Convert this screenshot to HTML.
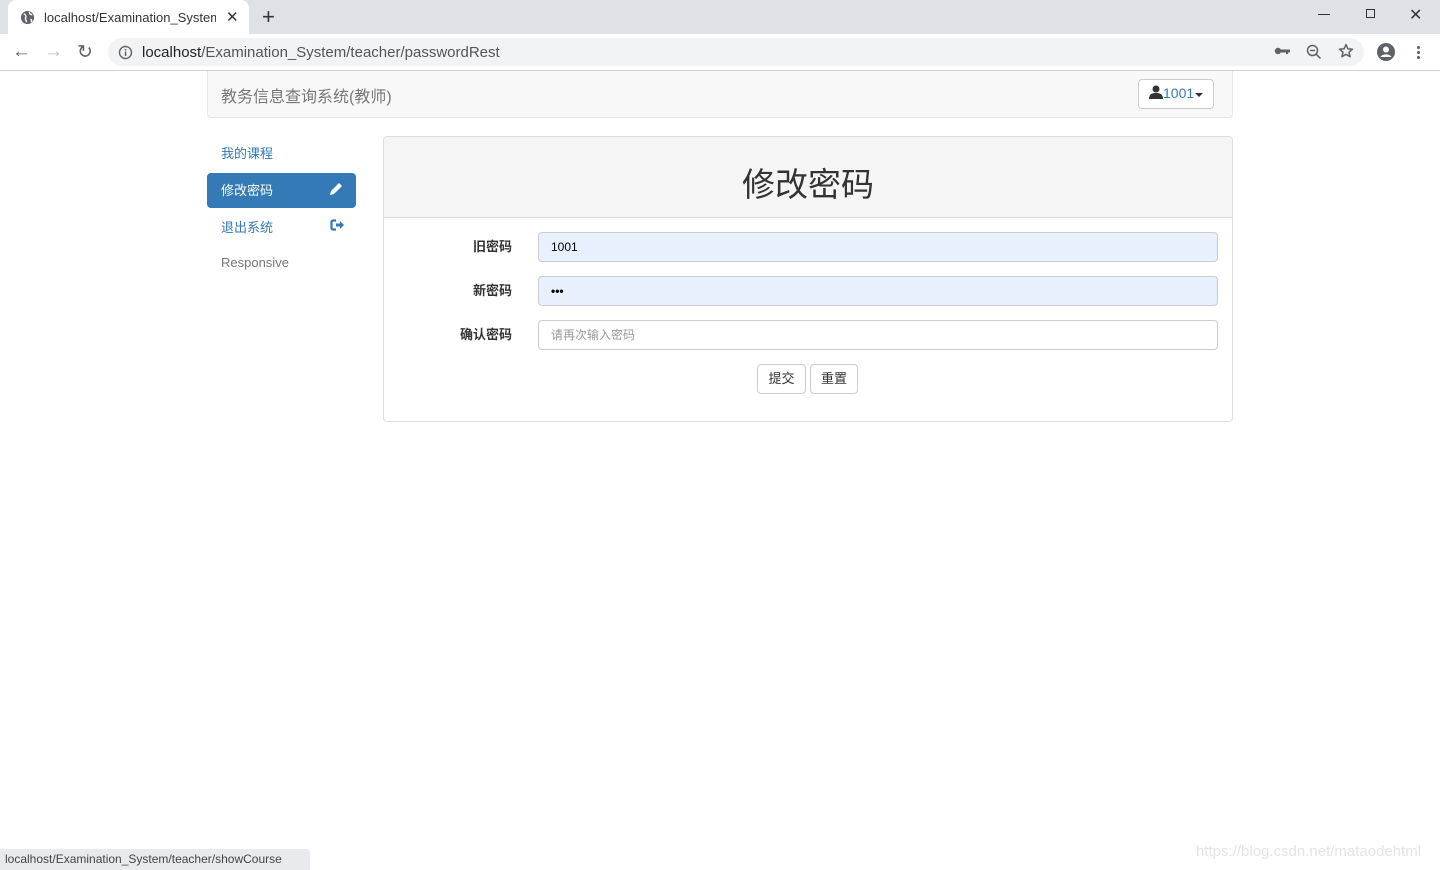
<!DOCTYPE html>
<html><head><meta charset="utf-8"><style>
*{box-sizing:border-box;margin:0;padding:0}
body{width:1440px;height:870px;position:relative;overflow:hidden;background:#fff;font-family:"Liberation Sans","Noto Sans CJK SC",sans-serif;font-size:14px;color:#333}
.abs{position:absolute}
.tabbar{left:0;top:0;width:1440px;height:34px;background:#dee1e6}
.tab{left:8px;top:0;width:241px;height:34px;background:#fff;border-radius:8px 8px 0 0}
.toolbar{left:0;top:34px;width:1440px;height:37px;background:#fff;border-bottom:1px solid #d0d0d0}
.omni{left:108px;top:38px;width:1256px;height:28px;background:#f1f3f4;border-radius:14px}
.field{position:absolute;left:538px;width:680px;height:30px;border:1px solid #ccc;border-radius:4px;font-size:12px;padding:0 12px;line-height:28px}
.lbl{position:absolute;right:928px;font-weight:bold;font-size:13px;color:#333}
.btn{position:absolute;top:364px;height:30px;border:1px solid #ccc;border-radius:4px;background:#fff;font-size:13px;text-align:center;line-height:28px}
</style></head><body>
<div class="abs tabbar"></div>
<div class="abs tab"></div>
<svg class="abs" style="left:20px;top:10px" width="15" height="15" viewBox="0 0 16 16"><circle cx="8" cy="8" r="7" fill="#5f6368"/><path d="M4 4c2 1 3 2 2 4s1 3 1 5M10 2c0 2 1 3 3 3M11 10c1 0 2 1 1 3" stroke="#fff" stroke-width="1.5" fill="none"/></svg>
<div class="abs" style="left:44px;top:10px;font-size:13px;color:#333;width:172px;overflow:hidden;white-space:nowrap">localhost/Examination_System</div>
<div class="abs" style="left:226px;top:8px;font-size:15px;color:#333">✕</div>
<div class="abs" style="left:262px;top:4px;font-size:22px;color:#333">+</div>
<div class="abs" style="left:1318px;top:14px;width:12px;height:1px;background:#333"></div>
<div class="abs" style="left:1366px;top:9px;width:9px;height:9px;border:1px solid #333"></div>
<div class="abs" style="left:1409px;top:5px;font-size:16px;color:#333">✕</div>
<div class="abs toolbar"></div>
<div class="abs" style="left:12px;top:41px;font-size:19px;color:#5f6368">←</div>
<div class="abs" style="left:44px;top:41px;font-size:19px;color:#bbb">→</div>
<div class="abs" style="left:77px;top:41px;font-size:19px;color:#5f6368">↻</div>
<div class="abs omni"></div>
<svg class="abs" style="left:118px;top:45px" width="15" height="15"><circle cx="7.5" cy="7.5" r="6" stroke="#5f6368" stroke-width="1.4" fill="none"/><rect x="6.8" y="6.5" width="1.5" height="4.5" fill="#5f6368"/><rect x="6.8" y="4" width="1.5" height="1.5" fill="#5f6368"/></svg>
<div class="abs" style="left:142px;top:44px;font-size:15px;color:#555"><span style="color:#222">localhost</span>/Examination_System/teacher/passwordRest</div>
<svg class="abs" style="left:1274px;top:46px" width="16" height="10"><circle cx="4" cy="5" r="3.2" fill="#5f6368"/><rect x="6" y="3.5" width="10" height="3" fill="#5f6368"/><rect x="12" y="5" width="2" height="3" fill="#5f6368"/></svg>
<svg class="abs" style="left:1306px;top:44px" width="16" height="16"><circle cx="6.5" cy="6.5" r="5" stroke="#5f6368" stroke-width="1.5" fill="none"/><path d="M10 10l4.5 4.5M4 6.5h5" stroke="#5f6368" stroke-width="1.5"/></svg>
<svg class="abs" style="left:1338px;top:43px" width="16" height="16" viewBox="0 0 16 16"><path d="M8 1.5l1.9 4.3 4.6.4-3.5 3 1.1 4.5L8 11.3 3.9 13.7 5 9.2 1.5 6.2l4.6-.4z" stroke="#5f6368" stroke-width="1.5" fill="none" stroke-linejoin="round"/></svg>
<svg class="abs" style="left:1376px;top:42px" width="20" height="20"><circle cx="10" cy="10" r="9" fill="#5f6368"/><circle cx="10" cy="7.5" r="3" fill="#fff"/><path d="M4.5 15c2-3.5 9-3.5 11 0" fill="#fff"/></svg>
<div class="abs" style="left:1417px;top:45px;width:3px;height:14px;background:radial-gradient(circle,#5f6368 1.4px,transparent 1.6px) 0 0/3px 5px"></div>

<div class="abs" style="left:207px;top:71px;width:1026px;height:47px;background:#f8f8f8;border:1px solid #e7e7e7;border-top:none;border-radius:0 0 4px 4px"></div>
<div class="abs" style="left:221px;top:83px;font-size:16px;color:#777">教务信息查询系统(教师)</div>
<div class="abs" style="left:1138px;top:79px;width:76px;height:30px;border:1px solid #ccc;border-radius:4px;background:#fff"></div>
<svg class="abs" style="left:1149px;top:85px" width="14" height="14"><circle cx="7" cy="4" r="3.5" fill="#333"/><path d="M0 14c0-5 3-6 7-6s7 1 7 6z" fill="#333"/></svg>
<div class="abs" style="left:1163px;top:85px;font-size:14px;color:#337ab7">1001</div>
<div class="abs" style="left:1195px;top:93px;border-left:4px solid transparent;border-right:4px solid transparent;border-top:4px solid #333"></div>

<div class="abs" style="left:221px;top:143px;font-size:13px;color:#337ab7">我的课程</div>
<div class="abs" style="left:207px;top:173px;width:149px;height:35px;background:#337ab7;border-radius:4px"></div>
<div class="abs" style="left:221px;top:180px;font-size:13px;color:#fff">修改密码</div>
<svg class="abs" style="left:329px;top:182px" width="14" height="14"><path d="M1 13l1-4 8-8 3 3-8 8z" fill="#fff"/></svg>
<div class="abs" style="left:221px;top:217px;font-size:13px;color:#337ab7">退出系统</div>
<svg class="abs" style="left:330px;top:219px" width="14" height="12"><path d="M6 1.5H3a1.5 1.5 0 0 0-1.5 1.5v6A1.5 1.5 0 0 0 3 10.5h3" stroke="#337ab7" stroke-width="2.2" fill="none"/><path d="M6 4.5h4v-2.5l4 4-4 4v-2.5h-4z" fill="#337ab7"/></svg>
<div class="abs" style="left:221px;top:255px;font-size:13px;color:#777">Responsive</div>

<div class="abs" style="left:383px;top:136px;width:850px;height:286px;border:1px solid #ddd;border-radius:4px"></div>
<div class="abs" style="left:384px;top:137px;width:848px;height:81px;background:#f5f5f5;border-bottom:1px solid #ddd;border-radius:3px 3px 0 0"></div>
<div class="abs" style="left:384px;top:158px;width:848px;text-align:center;font-size:33px;color:#333">修改密码</div>

<div class="lbl" style="top:236px">旧密码</div>
<div class="field" style="top:232px;background:#e8f0fe;color:#000">1001</div>
<div class="lbl" style="top:280px">新密码</div>
<div class="field" style="top:276px;background:#e8f0fe;color:#000;font-weight:bold">•••</div>
<div class="lbl" style="top:324px">确认密码</div>
<div class="field" style="top:320px;background:#fff;color:#999">请再次输入密码</div>
<div class="btn" style="left:757px;width:49px">提交</div>
<div class="btn" style="left:810px;width:48px">重置</div>

<div class="abs" style="left:0;top:849px;width:310px;height:21px;background:#e8eaed;border-top-right-radius:4px;font-size:12px;color:#444;padding:3px 0 0 5px">localhost/Examination_System/teacher/showCourse</div>
<div class="abs" style="left:1196px;top:843px;font-size:15px;color:#e4e4e4">https://blog.csdn.net/mataodehtml</div>
</body></html>
